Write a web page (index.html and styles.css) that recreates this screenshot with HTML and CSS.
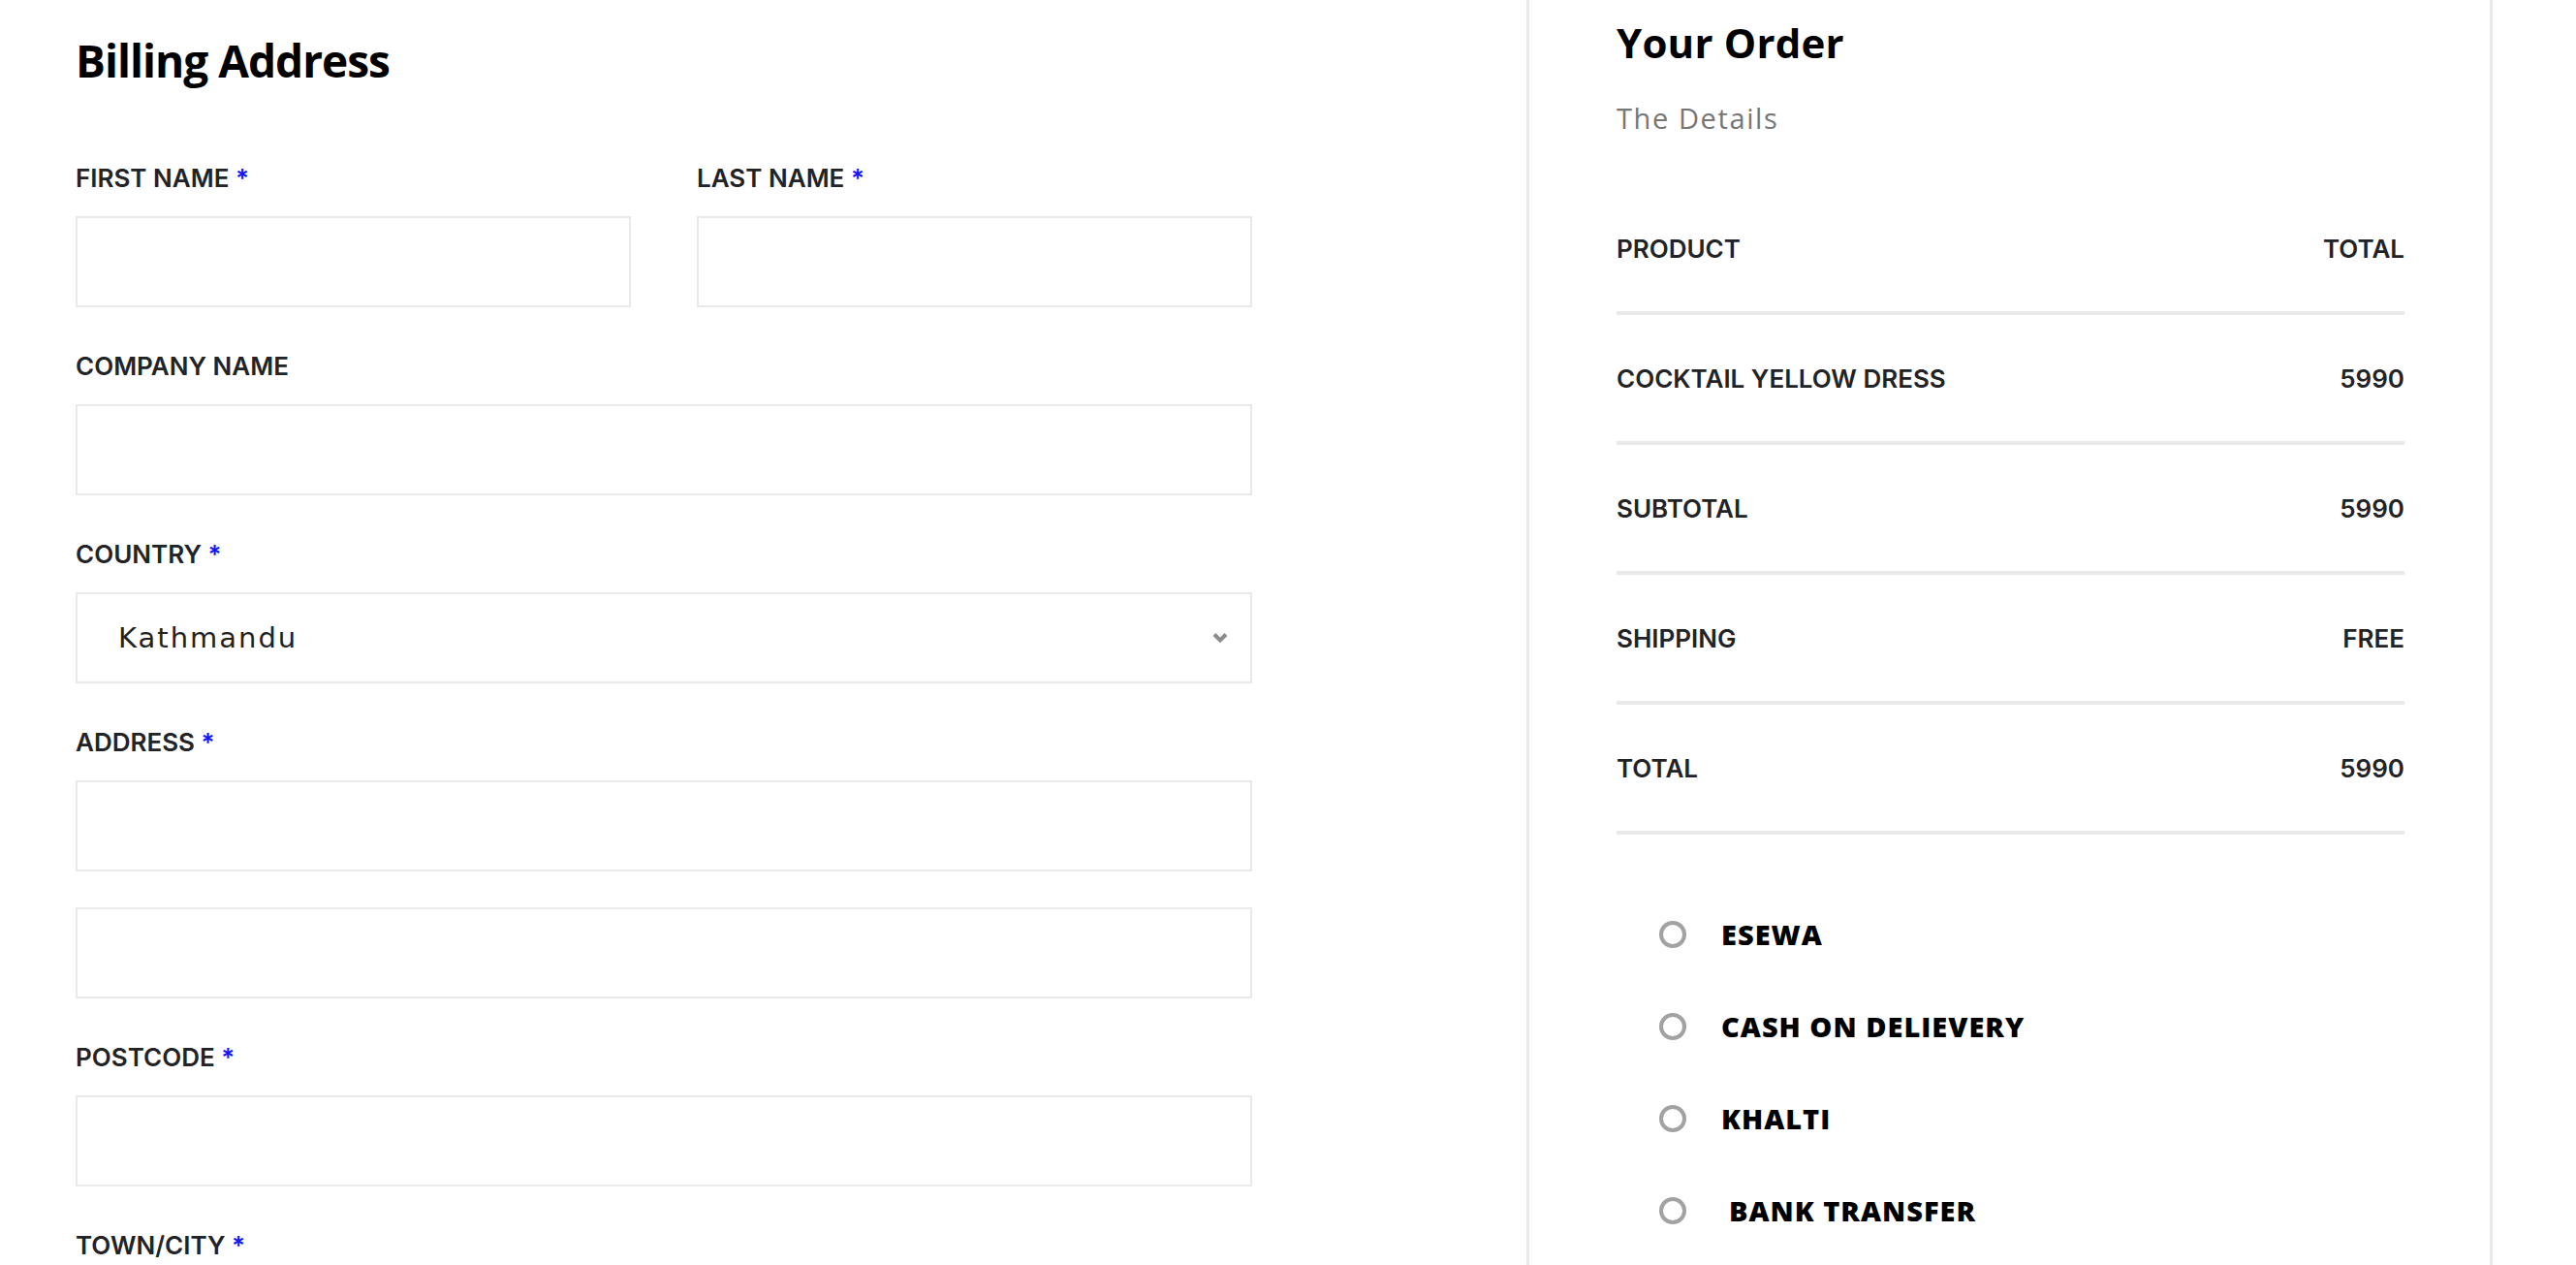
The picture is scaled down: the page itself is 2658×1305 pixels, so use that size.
FILE: index.html
```html
<!DOCTYPE html>
<html lang="en">
<head>
<meta charset="utf-8">
<title>Checkout</title>
<link rel="stylesheet" href="styles.css">
</head>
<body>
<div class="page">
  <section class="billing">
    <h1 class="title">Billing Address</h1>
    <div class="form">
      <div class="row-2">
        <div class="field">
          <label class="label">FIRST NAME <span class="req">*</span></label>
          <div class="input"></div>
        </div>
        <div class="field">
          <label class="label">LAST NAME <span class="req">*</span></label>
          <div class="input"></div>
        </div>
      </div>
      <div class="field">
        <label class="label">COMPANY NAME</label>
        <div class="input"></div>
      </div>
      <div class="field">
        <label class="label">COUNTRY <span class="req">*</span></label>
        <div class="input select">
          <span class="select-text">Kathmandu</span>
          <svg class="chev" width="16" height="12" viewBox="0 0 16 12"><polyline points="2,2.5 8,8.5 14,2.5" fill="none" stroke="#8c8c8c" stroke-width="4"/></svg>
        </div>
      </div>
      <div class="field">
        <label class="label">ADDRESS <span class="req">*</span></label>
        <div class="input"></div>
        <div class="input second"></div>
      </div>
      <div class="field">
        <label class="label">POSTCODE <span class="req">*</span></label>
        <div class="input"></div>
      </div>
      <div class="field">
        <label class="label">TOWN/CITY <span class="req">*</span></label>
        <div class="input"></div>
      </div>
    </div>
  </section>
  <aside class="order">
    <h2 class="order-title">Your Order</h2>
    <p class="details">The Details</p>
    <div class="table">
      <div class="trow"><span>PRODUCT</span><span>TOTAL</span></div>
      <div class="trow"><span>COCKTAIL YELLOW DRESS</span><span>5990</span></div>
      <div class="trow"><span>SUBTOTAL</span><span>5990</span></div>
      <div class="trow"><span>SHIPPING</span><span>FREE</span></div>
      <div class="trow"><span>TOTAL</span><span>5990</span></div>
    </div>
    <div class="payments">
      <label class="pay"><span class="radio"></span><span class="pay-text">ESEWA</span></label>
      <label class="pay"><span class="radio"></span><span class="pay-text">CASH ON DELIEVERY</span></label>
      <label class="pay"><span class="radio"></span><span class="pay-text">KHALTI</span></label>
      <label class="pay"><span class="radio"></span><span class="pay-text pad">BANK TRANSFER</span></label>
    </div>
  </aside>
</div>
</body>
</html>
```
FILE: styles.css
```css
html, body {
  margin: 0;
  padding: 0;
  background: #ffffff;
}
body {
  font-family: "Inter", "Liberation Sans", sans-serif;
  color: #222222;
  overflow: hidden;
  height: 1305px;
}
.page {
  display: flex;
  align-items: stretch;
  height: 1305px;
}
.billing {
  width: 1575px;
  box-sizing: border-box;
  padding: 31px 0 0 78px;
}
.title {
  margin: 0;
  font-family: "Open Sans", sans-serif;
  font-weight: 700;
  font-size: 46px;
  line-height: 63px;
  color: #000;
  letter-spacing: -1px;
}
.form {
  width: 1214px;
  margin-top: 74px;
  display: flex;
  flex-direction: column;
  gap: 45px;
}
.row-2 {
  display: grid;
  grid-template-columns: 573px 573px;
  column-gap: 68px;
}
.field {
  display: flex;
  flex-direction: column;
}
.label {
  font-family: "Inter", sans-serif;
  font-weight: 600;
  font-size: 26px;
  line-height: 32px;
  color: #222326;
  margin-bottom: 23px;
}
.req {
  color: #1414ff;
}
.input {
  height: 94px;
  box-sizing: border-box;
  border: 2px solid #e9e9e9;
  background: #fff;
}
.input.second {
  margin-top: 37px;
}
.select {
  display: flex;
  align-items: center;
  justify-content: space-between;
  padding: 0 23px 0 42px;
}
.select-text {
  font-family: "DejaVu Sans", sans-serif;
  font-size: 29px;
  letter-spacing: 2px;
  color: #222;
}
.chev {
  display: block;
}
.order {
  width: 997px;
  box-sizing: border-box;
  border-left: 3px solid #e9e9e9;
  border-right: 3px solid #e9e9e9;
  padding: 15px 88px 0 90px;
}
.order-title {
  margin: 0;
  font-family: "Open Sans", sans-serif;
  font-weight: 700;
  font-size: 42px;
  line-height: 57px;
  color: #000;
  letter-spacing: 0.2px;
}
.details {
  margin: 30px 0 0;
  font-family: "Open Sans", sans-serif;
  font-weight: 400;
  font-size: 29px;
  line-height: 40px;
  color: #767676;
  letter-spacing: 1.6px;
}
.table {
  margin-top: 49px;
}
.trow {
  height: 130px;
  border-bottom: 4px solid #e9e9e9;
  display: flex;
  align-items: center;
  justify-content: space-between;
  font-weight: 600;
  font-size: 26px;
  color: #222326;
}
.payments {
  margin-top: 55px;
  padding-left: 44px;
}
.pay {
  height: 95px;
  display: flex;
  align-items: center;
}
.radio {
  width: 28px;
  height: 28px;
  box-sizing: border-box;
  border: 4px solid #a2a2a2;
  border-radius: 50%;
  margin-right: 36px;
  flex: none;
}
.pay-text {
  font-family: "Open Sans", sans-serif;
  font-weight: 800;
  font-size: 29px;
  color: #000;
  letter-spacing: 1px;
}
.pay-text.pad {
  padding-left: 8px;
}
```
